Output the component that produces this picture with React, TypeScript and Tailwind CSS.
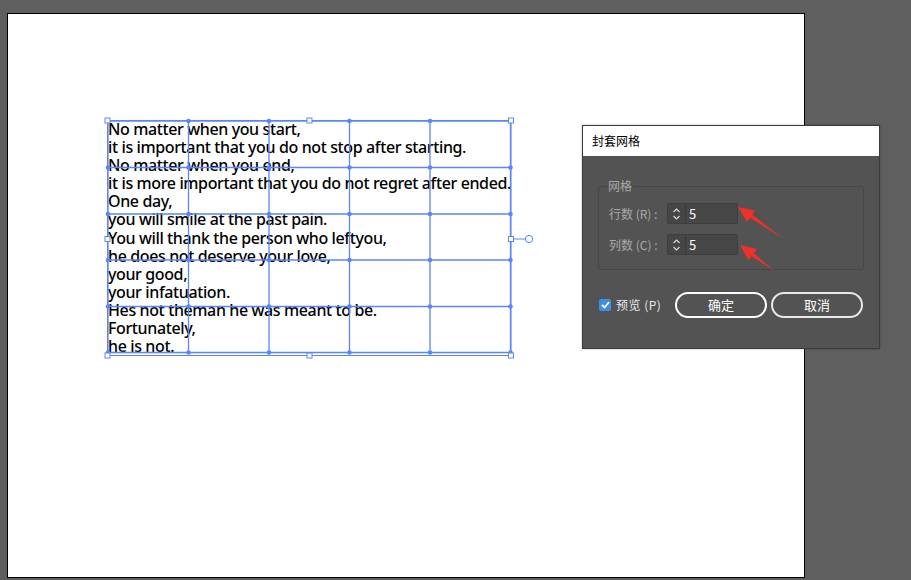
import React from "react";

const lines = [
  "No matter when you start,",
  "it is important that you do not stop after starting.",
  "No matter when you end,",
  "it is more important that you do not regret after ended.",
  "One day,",
  "you will smile at the past pain.",
  "You will thank the person who leftyou,",
  "he does not deserve your love,",
  "your good,",
  "your infatuation.",
  "Hes not theman he was meant to be.",
  "Fortunately,",
  "he is not.",
];

const xs = [108, 188.5, 269, 349.5, 430, 510.5];
const ys = [121, 167.5, 214, 260, 306.5, 352.5];
const BLUE = "#5a86f7";

function Mesh() {
  const handles: [number, number][] = [
    [107.5, 120.5], [309.5, 120.5], [511, 120.5],
    [107.5, 239], [511, 239],
    [107.5, 355.5], [309.5, 355.5], [511, 355.5],
  ];
  return (
    <svg className="absolute left-0 top-0 pointer-events-none" width={911} height={580}>
      {xs.map((x, i) => (
        <line key={"v" + i} x1={x} y1={ys[0]} x2={x} y2={ys[5]} stroke={BLUE} strokeWidth={1.3} />
      ))}
      {ys.map((y, i) => (
        <line key={"h" + i} x1={xs[0]} y1={y} x2={xs[5]} y2={y} stroke={BLUE} strokeWidth={1.3} />
      ))}
      <rect x={107.5} y={120.5} width={403.5} height={235} fill="none" stroke={BLUE} strokeWidth={1} />
      {xs.map((x) =>
        ys.map((y) => <circle key={x + "-" + y} cx={x} cy={y} r={2.3} fill={BLUE} />)
      )}
      <line x1={514} y1={239} x2={525.5} y2={239} stroke={BLUE} strokeWidth={1} />
      <circle cx={529} cy={239} r={3.6} fill="white" stroke={BLUE} strokeWidth={1} />
      {handles.map(([x, y], i) => (
        <rect key={"hd" + i} x={x - 2.5} y={y - 2.5} width={5} height={5} fill="white" stroke={BLUE} strokeWidth={1} />
      ))}
    </svg>
  );
}

function Arrows() {
  const arrow = (tx: number, ty: number, ex: number, ey: number) => {
    const dx = ex - tx, dy = ey - ty;
    const len = Math.hypot(dx, dy);
    const ux = dx / len, uy = dy / len;
    const px = -uy, py = ux;
    const hl = 16, hw = 7, sw = 3.2;
    const bx = tx + ux * hl, by = ty + uy * hl;
    const pts = [
      [tx, ty],
      [bx + px * hw, by + py * hw],
      [bx + px * sw * 0.6, by + py * sw * 0.6],
      [ex, ey],
      [bx - px * sw * 0.6, by - py * sw * 0.6],
      [bx - px * hw, by - py * hw],
    ];
    return pts.map((p) => p.join(",")).join(" ");
  };
  return (
    <svg className="absolute left-0 top-0 pointer-events-none" width={911} height={580}>
      <polygon points={arrow(738, 207, 783, 238.5)} fill="#f2302b" />
      <polygon points={arrow(740, 245, 773, 270)} fill="#f2302b" />
    </svg>
  );
}

function Spinner({ value }: { value: string }) {
  return (
    <div className="flex h-[21px] w-[71px] rounded-[2px] border border-[#3e3e3e] bg-[#464646]">
      <div className="flex w-[18px] flex-col items-center justify-center border-r border-[#3a3a3a]">
        <svg width="9" height="16" viewBox="0 0 9 16">
          <path d="M1.5 6 L4.5 3 L7.5 6" fill="none" stroke="#d8d8d8" strokeWidth="1.2" />
          <path d="M1.5 10 L4.5 13 L7.5 10" fill="none" stroke="#d8d8d8" strokeWidth="1.2" />
        </svg>
      </div>
      <div className="flex items-center pl-[3px] text-[13px] leading-none text-white">
        {value}
      </div>
    </div>
  );
}

export default function App() {
  const cjk = { fontFamily: '"Noto Sans CJK SC", "Noto Sans", sans-serif' };
  return (
    <div className="relative h-[580px] w-[911px] overflow-hidden bg-[#5f5f5f]">
      <div className="ml-[7px] mt-[13px] h-[565px] w-[798px] border border-black bg-white">
        <div
          className="ml-[100px] mt-[106px] text-[16px] font-medium leading-[18.1px] text-black"
          style={{ fontFamily: '"Noto Sans", sans-serif', letterSpacing: "-0.38px" }}
        >
          {lines.map((l, i) => (
            <div key={i} className="whitespace-pre">{l}</div>
          ))}
        </div>
      </div>
      <Mesh />

      <div
        className="absolute left-[582px] top-[125px] flex h-[224px] w-[298px] flex-col border border-[#3a3a3a] bg-[#535353] shadow-[0_0_2px_rgba(0,0,0,0.3)]"
        style={cjk}
      >
        <div className="flex h-[30px] items-center bg-white pl-[9px] text-[12px] text-black">封套网格</div>
        <div className="relative ml-[15px] mt-[30px] h-[84px] w-[266px] rounded-[3px] border border-[#474747]">
          <div className="absolute left-[8px] top-[-10px] bg-[#535353] px-[1px] text-[12px] leading-[18px] text-[#a8a8a8]">网格</div>
          <div className="ml-[10px] mt-[16px] flex flex-col gap-[10px]">
            <div className="flex items-center gap-[3px]">
              <span className="w-[55px] whitespace-nowrap text-[12px] text-[#a9a9a9]">行数 (R) :</span>
              <Spinner value="5" />
            </div>
            <div className="flex items-center gap-[3px]">
              <span className="w-[55px] whitespace-nowrap text-[12px] text-[#a9a9a9]">列数 (C) :</span>
              <Spinner value="5" />
            </div>
          </div>
        </div>
        <div className="ml-[16px] mt-[22px] flex items-center">
          <div className="flex h-[12px] w-[12px] items-center justify-center rounded-[2px] bg-[#3d8fe6]">
            <svg width="9" height="8" viewBox="0 0 9 8">
              <path d="M1 4 L3.5 6.5 L8 1.2" fill="none" stroke="white" strokeWidth="1.8" />
            </svg>
          </div>
          <span className="ml-[5px] w-[56px] whitespace-nowrap text-[12px] tracking-[0.5px] text-[#e8e8e8]">预览 (P)</span>
          <button className="ml-[3px] h-[26px] w-[92px] rounded-full border-2 border-white text-[13px] text-white">确定</button>
          <button className="ml-[4px] h-[26px] w-[92px] rounded-full border-2 border-[#e8e8e8] text-[13px] text-white">取消</button>
        </div>
      </div>
      <Arrows />
    </div>
  );
}
